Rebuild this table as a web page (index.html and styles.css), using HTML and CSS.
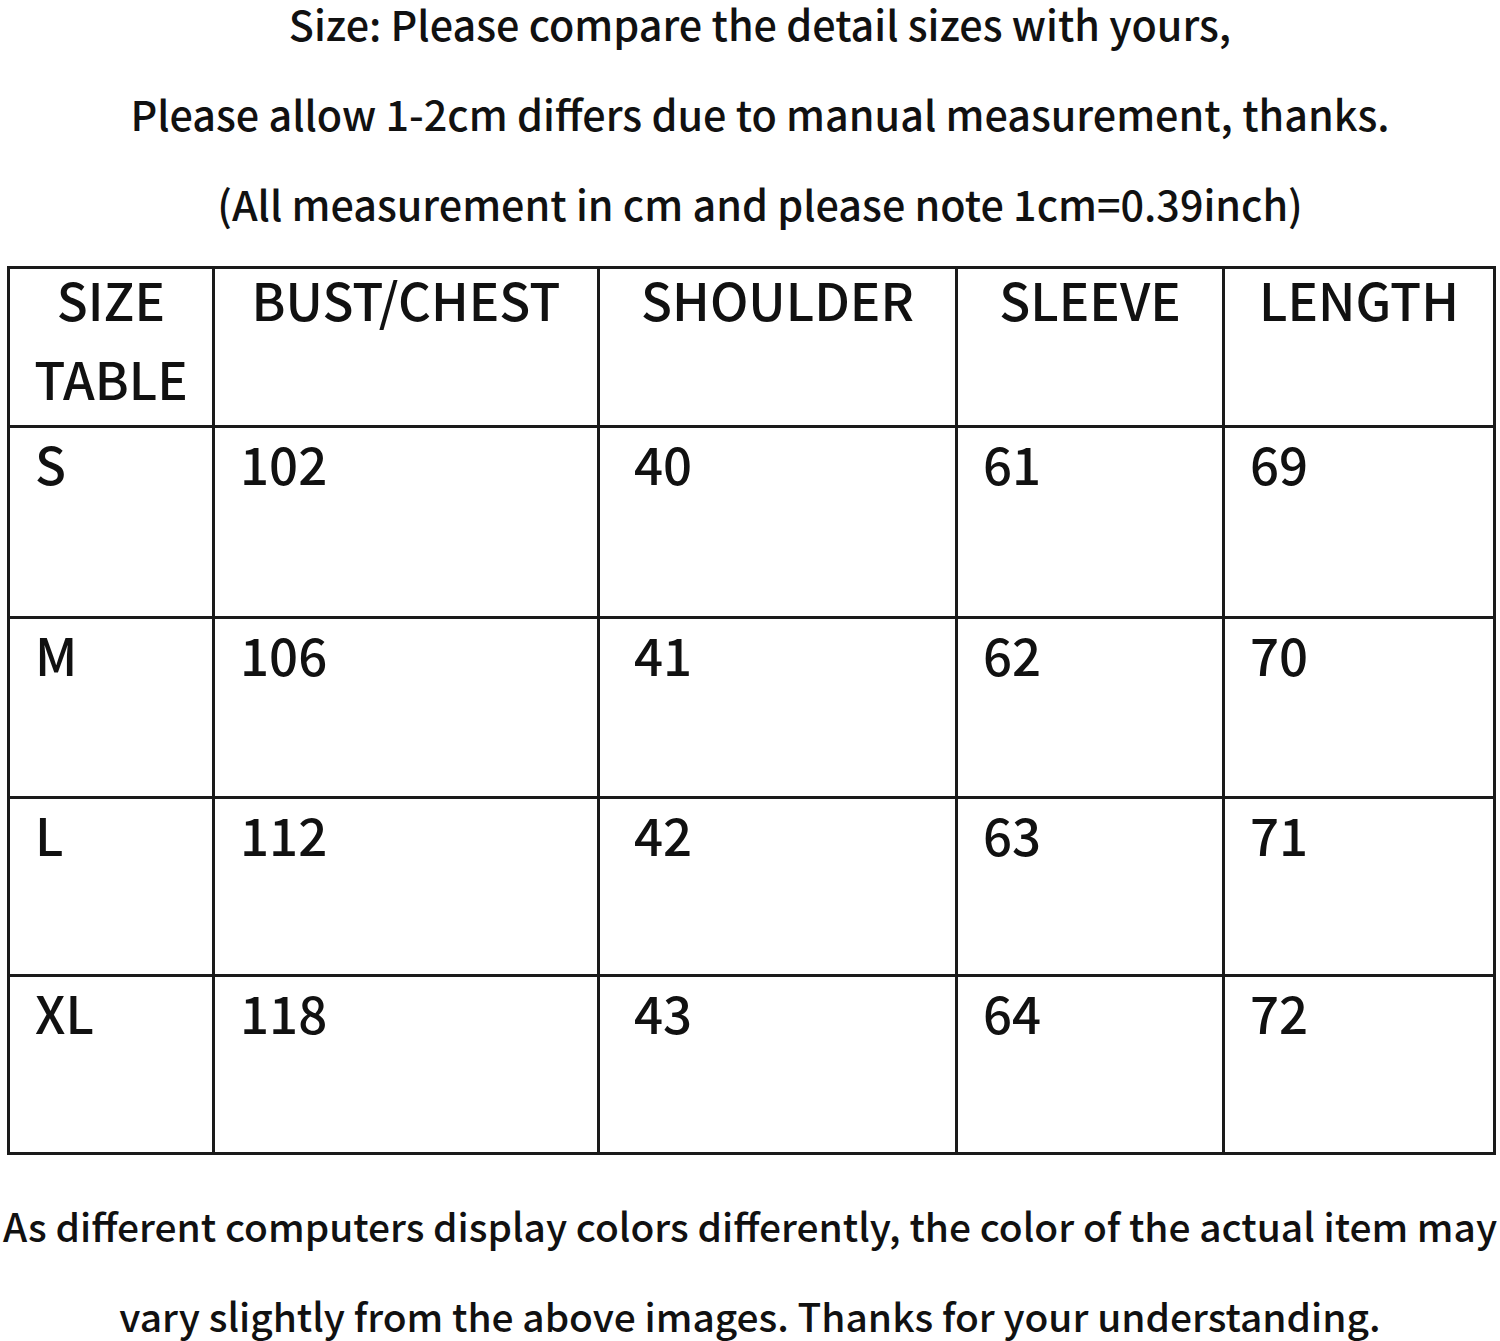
FILE: index.html
```html
<!DOCTYPE html>
<html>
<head>
<meta charset="utf-8">
<link rel="stylesheet" href="styles.css">
</head>
<body>
<div class="page">
  <div class="intro">
    <p class="line first">Size: Please compare the detail sizes with yours,</p>
    <p class="line">Please allow 1-2cm differs due to manual measurement, thanks.</p>
    <p class="line">(All measurement in cm and please note 1cm=0.39inch)</p>
  </div>
  <table class="chart">
    <colgroup>
      <col class="c1"><col class="c2"><col class="c3"><col class="c4"><col class="c5">
    </colgroup>
    <tr class="head">
      <th><div class="hd">SIZE<br>TABLE</div></th>
      <th><div class="hd">BUST/CHEST</div></th>
      <th><div class="hd">SHOULDER</div></th>
      <th><div class="hd">SLEEVE</div></th>
      <th><div class="hd">LENGTH</div></th>
    </tr>
    <tr class="r1"><td>S</td><td>102</td><td class="k3">40</td><td>61</td><td>69</td></tr>
    <tr class="r2"><td>M</td><td>106</td><td class="k3">41</td><td>62</td><td>70</td></tr>
    <tr class="r3"><td>L</td><td>112</td><td class="k3">42</td><td>63</td><td>71</td></tr>
    <tr class="r4"><td>XL</td><td>118</td><td class="k3">43</td><td>64</td><td>72</td></tr>
  </table>
  <div class="outro">
    <p class="line">As different computers display colors differently, the color of the actual item may</p>
    <p class="line">vary slightly from the above images. Thanks for your understanding.</p>
  </div>
</div>
</body>
</html>
```

FILE: styles.css
```css
html, body {
  margin: 0;
  padding: 0;
  background: #fff;
}
body {
  font-family: "Noto Sans CJK SC", "Liberation Sans", sans-serif;
  color: #111;
}
.page {
  width: 1500px;
}
.intro, .outro {
  display: flex;
  flex-direction: column;
  align-items: center;
}
.line {
  margin: 0;
  font-size: 41.3px;
  font-weight: 500;
  line-height: 90px;
  white-space: nowrap;
}
.line.first {
  line-height: 46px;
  margin-bottom: 22px;
}
.outro .line {
  font-size: 38.9px;
}
.intro {
  padding-left: 20px;
}
.chart {
  border-collapse: collapse;
  margin: 18px 0 0 7px;
  width: 1486px;
  table-layout: fixed;
}
.c1 { width: 205px; }
.c2 { width: 385px; }
.c3 { width: 358px; }
.c4 { width: 267px; }
.c5 { width: 271px; }
.chart th, .chart td {
  border: 3px solid #1a1a1a;
  vertical-align: top;
  padding: 0;
}
.chart th {
  font-weight: 500;
  font-size: 51px;
  line-height: 79px;
  text-align: center;
  height: 156px;
}
.hd {
  margin-top: -9px;
}
.chart td {
  font-size: 51px;
  font-weight: 500;
  line-height: 70px;
  text-align: left;
  padding-left: 25px;
}
.chart td.k3 {
  padding-left: 34px;
}
.r1 td { height: 188px; }
.r2 td { height: 177px; }
.r3 td { height: 175px; }
.r4 td { height: 175px; }
.outro {
  margin-top: 25px;
}
```
